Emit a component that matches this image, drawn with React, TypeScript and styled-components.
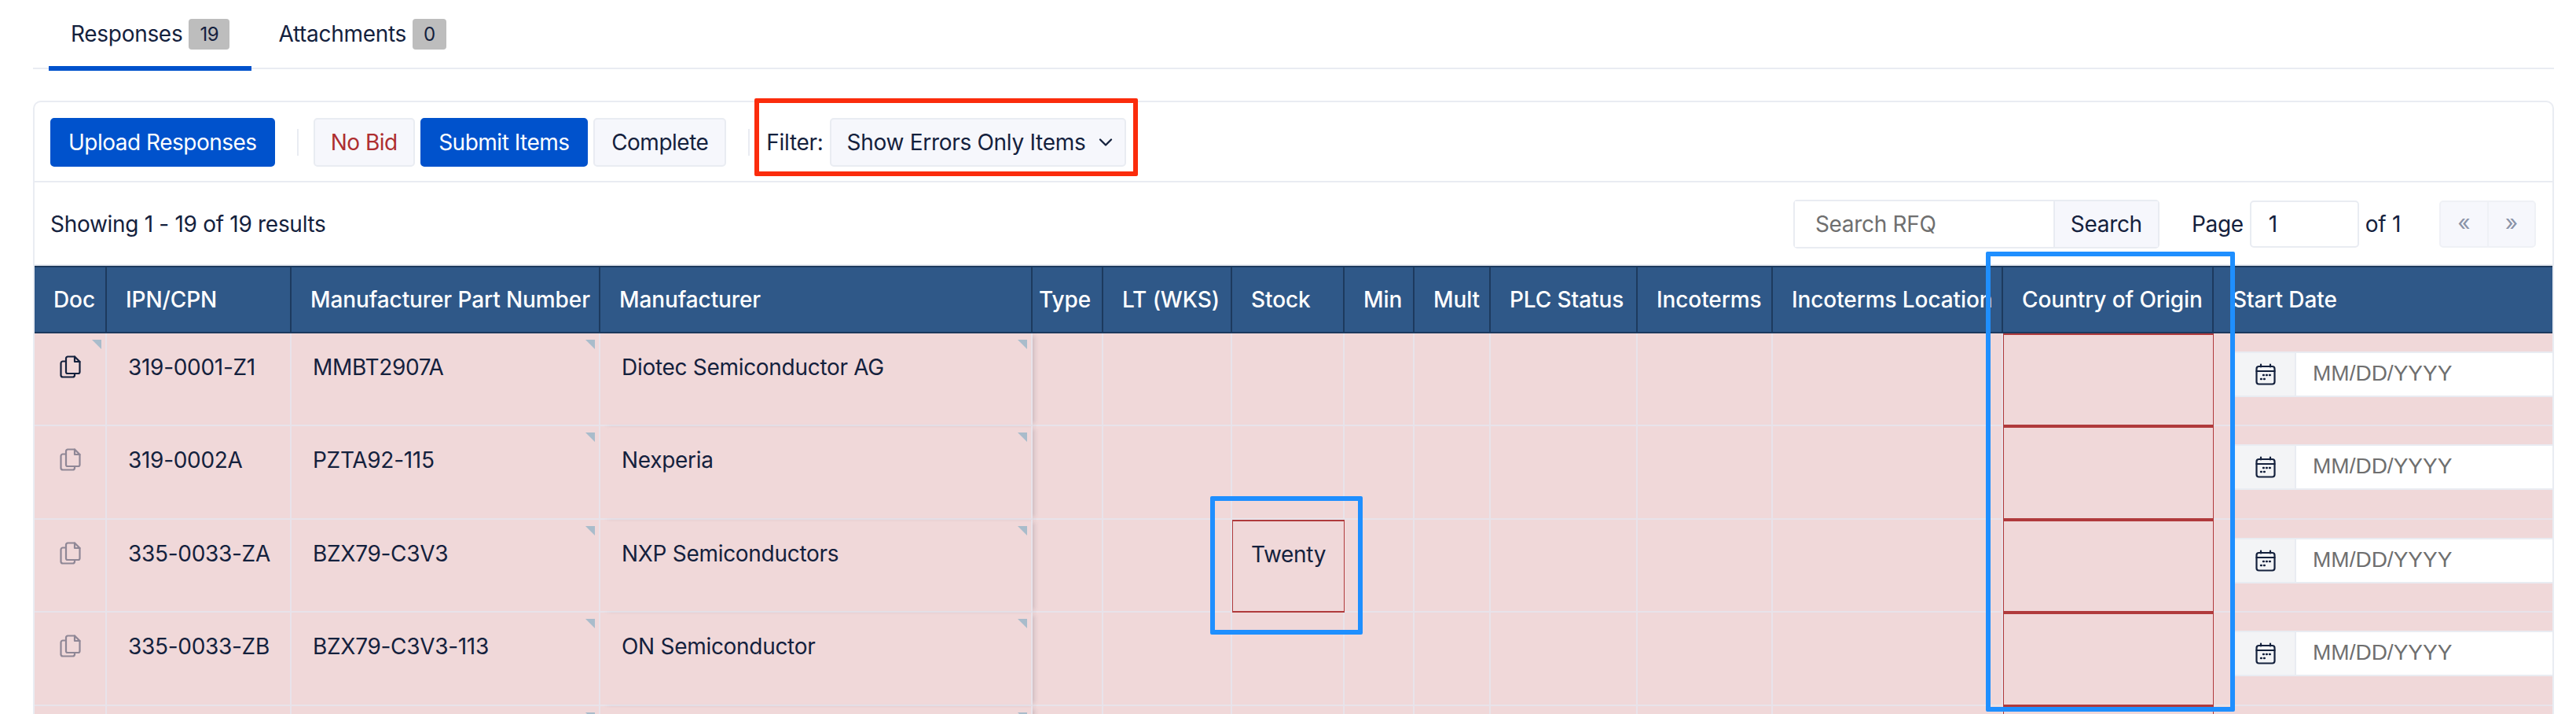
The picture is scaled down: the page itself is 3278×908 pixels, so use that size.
import React from 'react'
import styled, { createGlobalStyle } from 'styled-components'
import { ChevronDown } from 'lucide-react'

const GlobalStyle = createGlobalStyle`
  html, body {
    margin: 0;
    height: 908px;
    overflow: hidden;
    background: #fff;
  }
  * { box-sizing: border-box; }
  body {
    font-family: Inter, "Liberation Sans", sans-serif;
    font-size: 28px;
    letter-spacing: -0.3px;
    color: #14213d;
  }
`

const COLUMNS = '92px 235px 393px 550px 90px 164px 143px 89px 97px 187px 172px 293px 268px 1fr'

const Page = styled.div`
  position: relative;
  width: 3278px;
  height: 908px;
  padding: 0 28px 0 42px;
  overflow: hidden;
`

const Tabs = styled.div`
  display: flex;
  height: 88px;
  padding-left: 20px;
  border-bottom: 2px solid #e9ecf2;
`

const Tab = styled.div<{ $active?: boolean }>`
  display: flex;
  align-items: flex-start;
  gap: 8px;
  height: 90px;
  padding: 24px 28px 0;
  margin-right: 6px;
  border-bottom: 6px solid ${(p) => (p.$active ? '#0052cc' : 'transparent')};
  line-height: 39px;
`

const Badge = styled.span`
  display: block;
  height: 39px;
  padding: 0 14px;
  border-radius: 4px;
  background: #bdbdbd;
  font-size: 24px;
  line-height: 39px;
`

const Card = styled.div`
  margin-top: 40px;
  border: 2px solid #e9ecf2;
  border-radius: 10px 10px 0 0;
  border-bottom: 0;
`

const Toolbar = styled.div`
  display: flex;
  align-items: center;
  height: 102px;
  padding: 2px 0 0 20px;
  border-bottom: 2px solid #e9ecf2;
`

const Divider = styled.span<{ $left: number; $right: number }>`
  width: 2px;
  height: 34px;
  margin: 0 ${(p) => p.$right}px 0 ${(p) => p.$left}px;
  background: #e9ecf2;
`

const Button = styled.button<{ $tone?: 'primary' | 'danger'; $pad: number }>`
  height: 62px;
  padding: 0 ${(p) => p.$pad}px;
  border: 2px solid ${(p) => (p.$tone === 'primary' ? '#0052cc' : '#e9ecf2')};
  border-radius: 5px;
  background: ${(p) => (p.$tone === 'primary' ? '#0052cc' : '#f6f7fc')};
  color: ${(p) => (p.$tone === 'primary' ? '#fff' : p.$tone === 'danger' ? '#ae2e30' : '#14213d')};
  font: inherit;
  letter-spacing: -0.5px;
  white-space: nowrap;
`

const ActionGroup = styled.div`
  display: flex;
  gap: 7.5px;
`

const FilterGroup = styled.div`
  position: relative;
  display: flex;
  align-items: center;
  gap: 8px;
`

const RedFrame = styled.div`
  position: absolute;
  top: -25px;
  bottom: -12px;
  left: -15px;
  right: -15px;
  border: 6px solid #fb2c0c;
  border-radius: 2px;
  pointer-events: none;
`

const Select = styled.div`
  display: flex;
  align-items: center;
  gap: 12px;
  height: 62px;
  padding: 0 10px 0 20px;
  border: 2px solid #e9ecf2;
  border-radius: 5px;
  background: #f6f7fc;
  white-space: nowrap;
`

const Summary = styled.div`
  display: flex;
  align-items: center;
  height: 106px;
  padding: 2px 21px 0 20px;
  border-bottom: 2px solid #e9ecf2;
`

const Results = styled.div`
  flex: 1;
`

const SearchBox = styled.div`
  display: flex;
  width: 466px;
  height: 62px;
  border: 2px solid #e9ecf2;
  border-radius: 5px;
`

const TextInput = styled.input`
  flex: 1;
  min-width: 0;
  padding: 0 26px;
  border: 0;
  outline: 0;
  background: #fff;
  color: #14213d;
  font: inherit;
  letter-spacing: inherit;
  &::placeholder { color: #6f6f6f; opacity: 1; }
`

const SearchButton = styled.div`
  display: flex;
  align-items: center;
  padding: 0 20px;
  border-left: 2px solid #e9ecf2;
  background: #f6f7fc;
`

const PageLabel = styled.span<{ $left: number; $right: number }>`
  margin: 0 ${(p) => p.$right}px 0 ${(p) => p.$left}px;
`

const PageInput = styled.input`
  width: 139px;
  height: 60px;
  padding: 0 22px;
  border: 2px solid #e9ecf2;
  border-radius: 5px;
  outline: 0;
  color: #14213d;
  font: inherit;
`

const Pager = styled.div`
  display: flex;
  width: 123px;
  height: 60px;
  margin-left: 48px;
  border: 2px solid #eff1f6;
  border-radius: 5px;
  background: #f6f7fc;
  color: #8a93a8;
`

const PagerItem = styled.span`
  flex: 1;
  display: flex;
  align-items: center;
  justify-content: center;
  padding-bottom: 4px;
  &:first-child { border-right: 2px solid #eff1f6; }
`

const HeadRow = styled.div`
  display: grid;
  grid-template-columns: ${COLUMNS};
  height: 86px;
  background: #2f5888;
  border-top: 2px solid #1d3a5e;
  border-bottom: 2px solid #1d3a5e;
`

const HeadCell = styled.div<{ $end?: boolean; $last?: boolean }>`
  display: flex;
  align-items: center;
  justify-content: ${(p) => (p.$end ? 'flex-end' : 'flex-start')};
  padding: ${(p) => (p.$end ? '0 14px 0 0' : '0 0 0 24px')};
  border-right: ${(p) => (p.$last ? '0' : '2px solid #1d3a5e')};
  color: #fff;
  font-weight: 500;
  letter-spacing: -0.1px;
  white-space: nowrap;
  overflow: hidden;
`

const Row = styled.div`
  display: grid;
  grid-template-columns: ${COLUMNS};
  height: 118.4px;
  background: #f0d8d9;
`

const Cell = styled.div<{ $note?: boolean; $frozen?: boolean; $invalid?: boolean; $center?: boolean }>`
  position: relative;
  padding: 26px 0 0 27px;
  line-height: 34px;
  white-space: nowrap;
  border-right: 2px solid #e8e3ea;
  border-bottom: 2px solid #e8e3ea;
  ${(p) => p.$center && 'padding: 25px 0 0; text-align: center;'}
  ${(p) => p.$frozen && 'z-index: 1; box-shadow: 5px 0 6px -3px rgba(40, 40, 60, 0.18);'}
  ${(p) => p.$invalid && 'border: 2px solid #b03a3c; border-left-width: 1.5px; border-right-width: 1.5px;'}
  ${(p) =>
    p.$note &&
    `&::after {
      content: '';
      position: absolute;
      top: 8px;
      right: 5px;
      border-top: 12px solid #a9bccb;
      border-left: 12px solid transparent;
    }`}
`

const DocCell = styled(Cell)`
  display: flex;
  justify-content: center;
  padding: 28px 0 0;
`

const DocIcon = styled.svg<{ $muted?: boolean }>`
  width: 27px;
  height: 29px;
  fill: none;
  stroke: ${(p) => (p.$muted ? '#8f8796' : '#14213d')};
  stroke-width: 2.2;
  stroke-linejoin: round;
  stroke-linecap: round;
`

const DateCell = styled.div`
  padding: 23px 0 0 22px;
  border-bottom: 2px solid #e8e3ea;
  overflow: hidden;
`

const DateGroup = styled.div`
  display: flex;
  height: 58px;
  border-top: 2px solid #e9ecf2;
  border-bottom: 2px solid #e9ecf2;
  background: #fff;
`

const DateAddon = styled.div`
  display: flex;
  align-items: center;
  justify-content: center;
  width: 83px;
  padding-left: 6px;
  border-right: 2px solid #e9ecf2;
  background: #f3f4f6;
`

const DateInput = styled(TextInput)`
  padding: 0 21px 2px;
  font-family: "Liberation Sans", Arial, sans-serif;
  letter-spacing: 0;
`

const CalendarIcon = styled.svg`
  width: 26px;
  height: 28px;
  fill: none;
  stroke: #14213d;
  stroke-width: 2.2;
  stroke-linecap: round;
`

const BlueFrame = styled.div<{ $x: number; $y: number; $w: number; $h: number }>`
  position: absolute;
  left: ${(p) => p.$x}px;
  top: ${(p) => p.$y}px;
  width: ${(p) => p.$w}px;
  height: ${(p) => p.$h}px;
  border: 6px solid #1f8fff;
  border-radius: 2px;
  z-index: 2;
  pointer-events: none;
`

const headers = [
  'Doc',
  'IPN/CPN',
  'Manufacturer Part Number',
  'Manufacturer',
  'Type',
  'LT (WKS)',
  'Stock',
  'Min',
  'Mult',
  'PLC Status',
  'Incoterms',
  'Incoterms Location',
  'Country of Origin',
  'Start Date'
]

const rows = [
  { ipn: '319-0001-Z1', mpn: 'MMBT2907A', maker: 'Diotec Semiconductor AG', doc: true },
  { ipn: '319-0002A', mpn: 'PZTA92-115', maker: 'Nexperia' },
  { ipn: '335-0033-ZA', mpn: 'BZX79-C3V3', maker: 'NXP Semiconductors', stock: 'Twenty' },
  { ipn: '335-0033-ZB', mpn: 'BZX79-C3V3-113', maker: 'ON Semiconductor' },
  { ipn: '', mpn: '', maker: '' }
]

const DocGlyph = ({ muted }: { muted: boolean }) => (
  <DocIcon $muted={muted} viewBox='0 0 27 29'>
    <path d='M10 1.500h9l6.500 6.500v13a2 2 0 0 1-2 2H10a2 2 0 0 1-2-2v-17a2.500 2.500 0 0 1 2-2.500z' />
    <path d='M19 1.500V8h6.500' />
    <path d='M8 7.500H4a2.500 2.500 0 0 0-2.500 2.500v15.500A2.500 2.500 0 0 0 4 27.500h12.500a2.500 2.500 0 0 0 2.500-2v-2.500' />
  </DocIcon>
)

const CalendarGlyph = () => (
  <CalendarIcon viewBox='0 0 26 28'>
    <rect x='1.500' y='4' width='23' height='22.500' rx='3' />
    <path d='M7 1.500v3M19 1.500v3M1.500 10h23' />
    <path d='M10 15h.8M14 15h.8M18 15h.8M7 20h.8M11 20h.8' strokeWidth='2.400' />
  </CalendarIcon>
)

const App = () => {
  return (
    <Page>
      <GlobalStyle />
      <Tabs>
        <Tab $active>
          Responses <Badge>19</Badge>
        </Tab>
        <Tab>
          Attachments <Badge>0</Badge>
        </Tab>
      </Tabs>
      <Card>
        <Toolbar>
          <Button $tone='primary' $pad={21}>Upload Responses</Button>
          <Divider $left={28} $right={19} />
          <ActionGroup>
            <Button $tone='danger' $pad={20}>No Bid</Button>
            <Button $tone='primary' $pad={21}>Submit Items</Button>
            <Button $pad={21}>Complete</Button>
          </ActionGroup>
          <Divider $left={28} $right={21} />
          <FilterGroup>
            <span>Filter:</span>
            <Select>
              Show Errors Only Items
              <ChevronDown size={28} strokeWidth={2} />
            </Select>
            <RedFrame />
          </FilterGroup>
        </Toolbar>
        <Summary>
          <Results>Showing 1 - 19 of 19 results</Results>
          <SearchBox>
            <TextInput placeholder='Search RFQ' readOnly />
            <SearchButton>Search</SearchButton>
          </SearchBox>
          <PageLabel $left={41} $right={8}>Page</PageLabel>
          <PageInput value='1' readOnly />
          <PageLabel $left={8} $right={1}>of 1</PageLabel>
          <Pager>
            <PagerItem>«</PagerItem>
            <PagerItem>»</PagerItem>
          </Pager>
        </Summary>
        <HeadRow>
          {headers.map((title, i) => (
            <HeadCell key={title} $end={title === 'Type'} $last={i === headers.length - 1}>
              {title}
            </HeadCell>
          ))}
        </HeadRow>
        {rows.map((row, i) => (
          <Row key={i}>
            <DocCell $note={row.doc}>
              <DocGlyph muted={!row.doc} />
            </DocCell>
            <Cell>{row.ipn}</Cell>
            <Cell $note>{row.mpn}</Cell>
            <Cell $note $frozen>{row.maker}</Cell>
            <Cell />
            <Cell />
            <Cell $center $invalid={!!row.stock}>{row.stock}</Cell>
            <Cell />
            <Cell />
            <Cell />
            <Cell />
            <Cell />
            <Cell $invalid />
            <DateCell>
              <DateGroup>
                <DateAddon>
                  <CalendarGlyph />
                </DateAddon>
                <DateInput placeholder='MM/DD/YYYY' readOnly />
              </DateGroup>
            </DateCell>
          </Row>
        ))}
      </Card>
      <BlueFrame $x={2527} $y={320} $w={317} $h={585} />
      <BlueFrame $x={1540} $y={631} $w={194} $h={176} />
    </Page>
  )
}

export default App
